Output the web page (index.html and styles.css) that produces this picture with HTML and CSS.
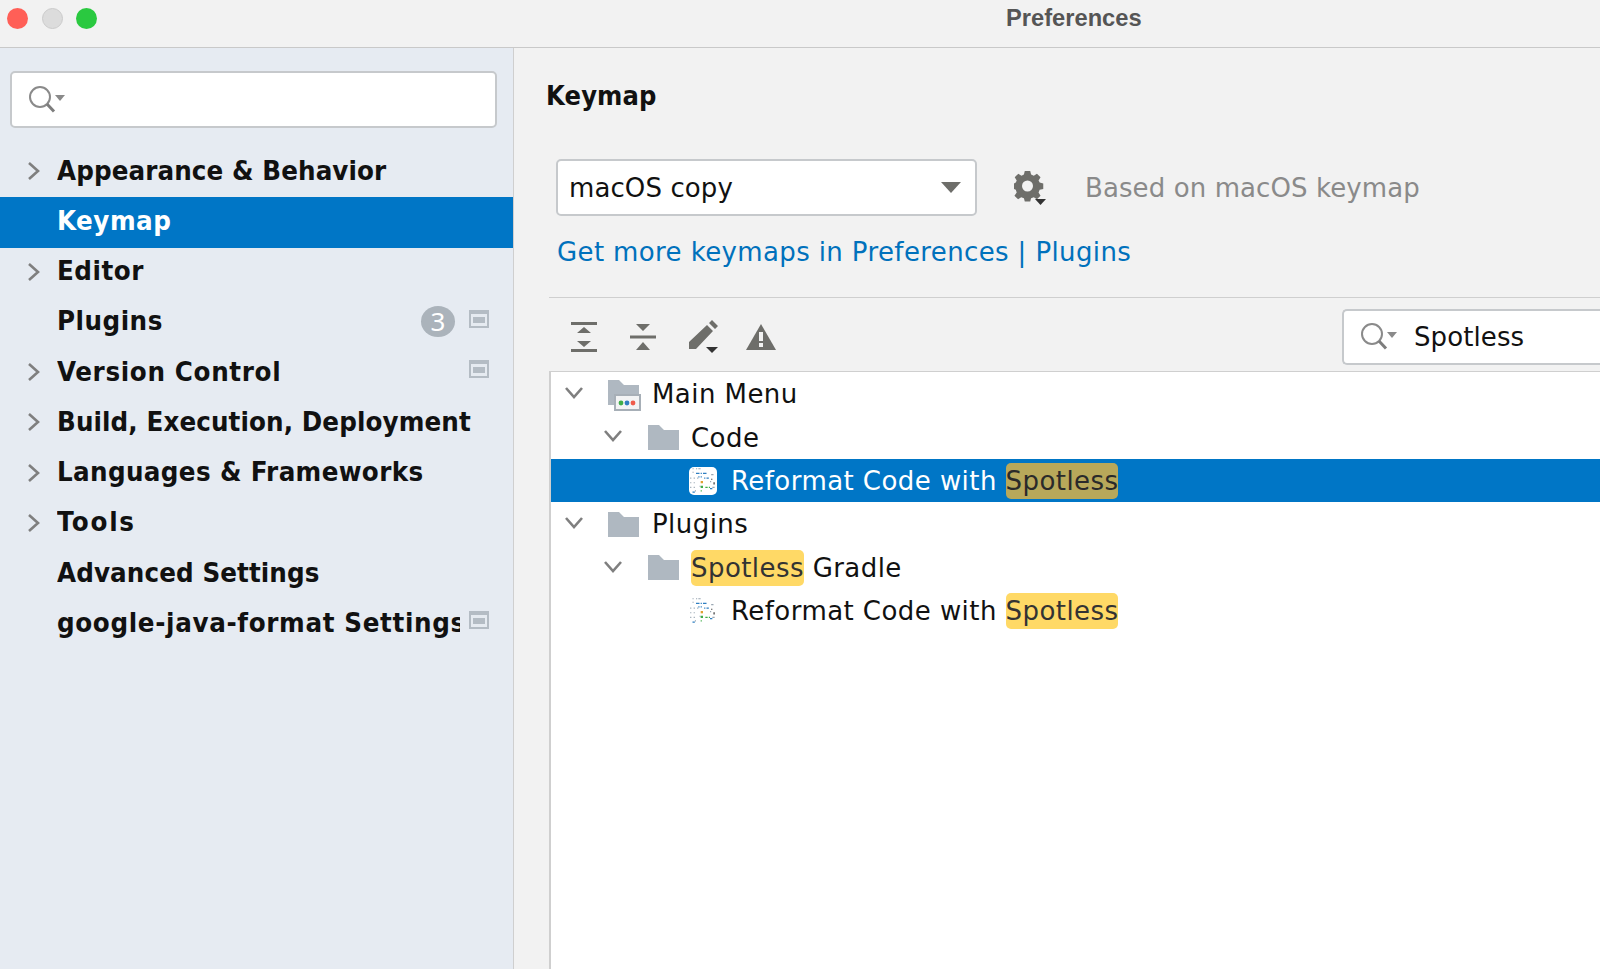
FILE: index.html
```html
<!DOCTYPE html>
<html lang="en">
<head>
<meta charset="utf-8">
<title>Preferences</title>
<link rel="stylesheet" href="styles.css">
</head>
<body>
<svg class="defs" width="0" height="0" aria-hidden="true">
  <defs>
    <symbol id="chev-r" viewBox="0 0 14 20"><path d="M2 2l9 8-9 8" fill="none" stroke="#7f7f7f" stroke-width="2.6"/></symbol>
    <symbol id="chev-d" viewBox="0 0 20 14"><path d="M2 2l8 9 8-9" fill="none" stroke="#7f7f7f" stroke-width="2.6"/></symbol>
    <symbol id="folder" viewBox="0 0 32 25"><path d="M1 0h11l5 5h15v20H1z" fill="#afb8c1"/></symbol>
    <symbol id="mag" viewBox="0 0 36 27"><circle cx="11" cy="11" r="10" fill="none" stroke="#8a8a8a" stroke-width="2"/><path d="M18 18l7 7.500" stroke="#7d7d7d" stroke-width="3"/><path d="M26 9h10l-5 6z" fill="#8a8a8a"/></symbol>
    <symbol id="proj" viewBox="0 0 20 18"><path d="M0 0h20v18H0z" fill="#b4bcc4"/><path d="M2 4h16v12H2z" fill="#e6ebf1"/><path d="M4 7h12v6H4z" fill="#b4bcc4"/></symbol>
    <symbol id="noise" viewBox="0 0 24 24">
      <g fill="#9aa7b3"><path d="M3 1h1v1H3zM6 1h1v1H6zM8 1h2v1H8zM3 4h1v1H3zM19 6h2v1h-2zM1 9h1v1H1zM4 9h1v1H4zM7 9h1v1H7zM18 12h1v1h-1zM1 13h1v1H1zM4 13h1v1H4zM9 16h1v1H9zM1 17h1v1H1zM4 17h1v1H4zM5 20h1v1H5zM20 17h2v1h-2z"/></g>
      <g fill="#2f7fc1"><path d="M6 5h3v1H6zM10 5h1v1h-1zM12 5h3v1h-3zM8 8h1v1H8zM10 8h1v1h-1zM13 9h1v1h-1zM15 9h2v1h-2zM3 21h2v1H3zM18 18h2v1h-2z"/></g>
      <g fill="#3fae49"><path d="M10 16h2v2h-2zM14 17h2v1h-2zM17 17h1v1h-1zM10 20h1v1h-1z"/></g>
      <g fill="#e0a030"><path d="M10 12h2v2h-2z"/></g>
      <g fill="#333"><path d="M19 10h1v1h-1zM21 13h1v2h-1z"/></g>
    </symbol>
  </defs>
</svg>
<div class="window">
  <header class="titlebar">
    <div class="lights">
      <span class="light red"></span>
      <span class="light grey"></span>
      <span class="light green"></span>
    </div>
    <div class="title">Preferences</div>
  </header>
  <div class="content">
    <aside class="sidebar">
      <div class="side-search">
        <svg class="mag" width="36" height="27"><use href="#mag"/></svg>
      </div>
      <nav class="side-list">
        <div class="side-row"><svg class="chev-r" width="14" height="20"><use href="#chev-r"/></svg><span class="side-label">Appearance &amp; Behavior</span></div>
        <div class="side-row selected"><span class="side-label sp-1">Keymap</span></div>
        <div class="side-row"><svg class="chev-r" width="14" height="20"><use href="#chev-r"/></svg><span class="side-label sp-1">Editor</span></div>
        <div class="side-row"><span class="side-label sp-1">Plugins</span><span class="badge">3</span><svg class="proj" width="20" height="18"><use href="#proj"/></svg></div>
        <div class="side-row"><svg class="chev-r" width="14" height="20"><use href="#chev-r"/></svg><span class="side-label sp-2">Version Control</span><svg class="proj" width="20" height="18"><use href="#proj"/></svg></div>
        <div class="side-row"><svg class="chev-r" width="14" height="20"><use href="#chev-r"/></svg><span class="side-label">Build, Execution, Deployment</span></div>
        <div class="side-row"><svg class="chev-r" width="14" height="20"><use href="#chev-r"/></svg><span class="side-label sp-3">Languages &amp; Frameworks</span></div>
        <div class="side-row"><svg class="chev-r" width="14" height="20"><use href="#chev-r"/></svg><span class="side-label sp-4">Tools</span></div>
        <div class="side-row"><span class="side-label">Advanced Settings</span></div>
        <div class="side-row"><span class="side-label sp-2">google-java-format Settings</span><svg class="proj" width="20" height="18"><use href="#proj"/></svg></div>
      </nav>
    </aside>
    <main class="panel">
      <h1 class="heading">Keymap</h1>
      <div class="keymap-row">
        <div class="combo"><span>macOS copy</span><span class="combo-arrow"></span></div>
        <svg class="gear" width="34" height="34" viewBox="0 0 34 34">
          <g fill="#6e6e6a">
            <path d="M12 1h6l1 4 3 1.300 3.500-2.200 4 4-2.200 3.500L28.500 14l4 1v6l-4 1-1.200 3 2.200 3.500-4 4-3.500-2.200-3 1.200-1 3.500h-6l-1-3.500-3-1.200-3.500 2.200-4-4L3 25l-1-3-2-1v-6l2-1 1-2.400-2.200-3.500 4-4L8.300 6.300 11 5z" transform="translate(0 -1) scale(.9)"/>
          </g>
          <circle cx="13.500" cy="15" r="5.500" fill="#f2f2f2"/>
          <path d="M21 28h11l-5.500 6z" fill="#333"/>
        </svg>
        <span class="based">Based on macOS keymap</span>
      </div>
      <a class="more-link">Get more keymaps in Preferences | Plugins</a>
      <div class="toolbar">
        <svg class="tool" width="30" height="32" viewBox="0 0 30 32"><g fill="#6e6e6a"><path d="M2 1h26v3H2zM2 28h26v3H2zM15 6l7 6H8zM15 26l-7-6h14z"/></g></svg>
        <svg class="tool" width="30" height="32" viewBox="0 0 30 32"><g fill="#6e6e6a"><path d="M2 14.500h26v3H2zM8 3h14l-7 7zM15 21l7 8H8z"/></g></svg>
        <svg class="tool" width="32" height="34" viewBox="0 0 32 34"><g fill="#6e6e6a"><path d="M1 22L19 5l6 6L8 29H1zM21 3l3-3 6 6-3 3z"/></g><path d="M18 27h12l-6 6z" fill="#333"/></svg>
        <svg class="tool" width="32" height="28" viewBox="0 0 32 28"><path d="M16 1l15 26H1z" fill="#6e6e6a"/><path d="M14 9h4v9h-4zM14 20h4v4h-4z" fill="#f2f2f2"/></svg>
        <div class="tree-search">
          <svg class="mag" width="36" height="27"><use href="#mag"/></svg>
          <span>Spotless</span>
        </div>
      </div>
      <div class="tree">
        <div class="tree-row l0"><svg class="chev-d" width="20" height="14"><use href="#chev-d"/></svg>
          <svg class="main-icon" width="34" height="32" viewBox="0 0 34 32"><path d="M1 0h11l5 5h15v20H1z" fill="#afb8c1"/><path d="M8 15h25v15H8z" fill="#f2f3f4" stroke="#a7afb7" stroke-width="2"/><circle cx="14" cy="23" r="2.400" fill="#3fae49"/><circle cx="20" cy="23" r="2.400" fill="#2f7fc1"/><circle cx="26" cy="23" r="2.400" fill="#ef5b4b"/></svg>
          <span>Main Menu</span></div>
        <div class="tree-row l1"><svg class="chev-d" width="20" height="14"><use href="#chev-d"/></svg>
          <svg class="tree-icon" width="32" height="25"><use href="#folder"/></svg>
          <span>Code</span></div>
        <div class="tree-row l2 selected">
          <svg class="leaf on" width="28" height="28"><use href="#noise"/></svg>
          <span>Reformat Code with <mark class="hit dim">Spotless</mark></span></div>
        <div class="tree-row l0"><svg class="chev-d" width="20" height="14"><use href="#chev-d"/></svg>
          <svg class="tree-icon" width="32" height="25"><use href="#folder"/></svg>
          <span>Plugins</span></div>
        <div class="tree-row l1"><svg class="chev-d" width="20" height="14"><use href="#chev-d"/></svg>
          <svg class="tree-icon" width="32" height="25"><use href="#folder"/></svg>
          <span><mark class="hit">Spotless</mark> Gradle</span></div>
        <div class="tree-row l2">
          <svg class="leaf" width="28" height="28"><use href="#noise"/></svg>
          <span>Reformat Code with <mark class="hit">Spotless</mark></span></div>
      </div>
    </main>
  </div>
</div>
</body>
</html>
```
FILE: styles.css
```css
* { box-sizing: border-box; }
html, body { margin: 0; height: 100%; overflow: hidden; }
body { font-family: "DejaVu Sans", "Liberation Sans", sans-serif; color: #111; background: #f2f2f2; }
.defs { position: absolute; }

.window { display: flex; flex-direction: column; width: 1600px; height: 969px; overflow: hidden; }

.titlebar { flex: none; height: 48px; display: flex; align-items: center; background: #f2f2f2; border-bottom: 1px solid #c9c9c9; }
.lights { display: flex; gap: 13.500px; padding-left: 7px; margin-top: -10px; }
.light { width: 21px; height: 21px; border-radius: 50%; }
.red { background: #ff5f57; }
.grey { background: #dcdcdc; border: 1px solid #cbcbcb; }
.green { background: #2ac940; }
.title { margin-left: 909px; margin-top: -10px; font: 700 23.700px "Liberation Sans", sans-serif; color: #555; }

.content { flex: 1; display: flex; min-height: 0; }

.sidebar { flex: none; width: 514px; background: #e6ebf2; border-right: 1px solid #cfcfcf; }
.side-search { display: flex; align-items: center; height: 57px; margin: 23px 16px 0 10px; padding-left: 17px; background: #fff; border: 2px solid #c6c9cc; border-radius: 5px; }
.side-list { margin-top: 19px; }
.side-row { position: relative; display: flex; align-items: center; height: 50.250px; padding: 0 24px 0 57px; font-family: "DejaVu Sans Condensed", "DejaVu Sans", sans-serif; font-stretch: condensed; font-size: 27.400px; font-weight: 700; letter-spacing: 0.1px; }
.side-row.selected { background: #0076c6; color: #fff; }
.side-label { min-width: 0; flex: 1; white-space: nowrap; overflow: hidden; margin-right: 9px; padding-bottom: 4px; }
.sp-1 { letter-spacing: 0.5px; }
.sp-2 { letter-spacing: 0.65px; }
.sp-3 { letter-spacing: 0.36px; }
.sp-4 { letter-spacing: 1.7px; }
.chev-r { position: absolute; left: 27px; top: 14px; }
.badge { flex: none; width: 34px; height: 31px; margin: -2px 14px 0 0; border-radius: 50%; background: #abb3bb; color: #fff; font: 400 26px/31px "Noto Sans", sans-serif; text-align: center; letter-spacing: 0; }
.proj { flex: none; margin-top: -8px; }

.panel { flex: 1; min-width: 0; padding: 0 0 0 35px; background: #f2f2f2; }
.heading { margin: 28px 0 0 -3px; height: 39px; font-family: "DejaVu Sans Condensed", "DejaVu Sans", sans-serif; font-stretch: condensed; font-size: 27px; line-height: 39px; font-weight: 700; letter-spacing: 0.15px; }
.keymap-row { display: flex; align-items: center; height: 57px; margin: 44px 0 0 7px; }
.combo { display: flex; align-items: center; justify-content: space-between; width: 421px; height: 57px; padding: 0 14px 0 11px; background: #fff; border: 2px solid #c6c9cc; border-radius: 5px; font-size: 26px; letter-spacing: 0.1px; }
.combo-arrow { width: 0; height: 0; border-left: 10px solid transparent; border-right: 10px solid transparent; border-top: 11px solid #6e6e6a; }
.gear { flex: none; margin: 0 0 0 37px; }
.based { margin-left: 37px; font-size: 26px; letter-spacing: 0.1px; color: #8a8a8a; white-space: nowrap; }
.more-link { display: block; height: 36px; margin: 18px 0 0 8px; font-size: 26px; letter-spacing: 0.38px; line-height: 36px; color: #0071bc; white-space: nowrap; }

.toolbar { display: flex; align-items: center; height: 74px; margin-top: 27px; border-top: 1px solid #cfcfcf; padding: 4px 0 0 20px; }
.tool { flex: none; margin-right: 29px; }
.tool:nth-child(2) { margin-right: 30px; }
.tool:nth-child(3) { margin-right: 25px; }
.tree-search { display: flex; align-items: center; flex: none; width: 318px; height: 56px; margin-left: auto; margin-right: -60px; padding-left: 17px; background: #fff; border: 2px solid #c6c9cc; border-right: 0; border-radius: 5px 0 0 5px; font-size: 26px; letter-spacing: 0.1px; }
.tree-search span { margin-left: 17px; }

.tree { height: 600px; background: #fff; border-top: 1px solid #cfcfcf; border-left: 2px solid #cfcfcf; font-size: 26px; letter-spacing: 0.44px; }
.tree-row { position: relative; display: flex; align-items: center; height: 43.400px; padding-top: 1px; white-space: nowrap; }
.tree-row.selected { background: #0076c6; color: #fff; }
.l0 { padding-left: 56px; }
.l1 { padding-left: 96px; }
.l2 { padding-left: 138px; }
.chev-d { position: absolute; top: 14px; }
.l0 .chev-d { left: 13px; }
.l1 .chev-d { left: 52px; }
.tree-icon { flex: none; margin-right: 12px; }
.l0 .tree-icon { margin-right: 13px; }
.main-icon { flex: none; margin: 3px 11px 0 0; }
.leaf { flex: none; margin-right: 14px; }
.leaf.on { background: #fff; border-radius: 5px; }
.hit { padding: 3px 0; border-radius: 5px; background: #ffd966; color: #333; }
.hit.dim { background: #b8a85a; color: #2a2a2a; }
```
